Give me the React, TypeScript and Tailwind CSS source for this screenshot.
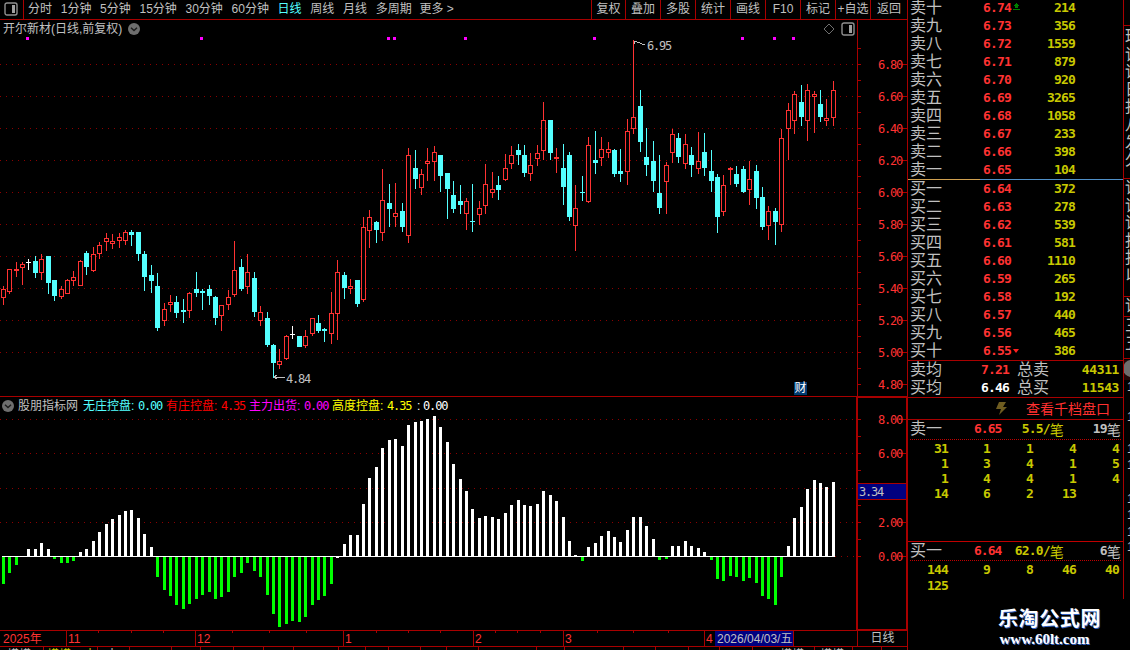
import React from "react";

type K = [number, number, number, number, string];
const seg1: K[] = [
[258,267,293,315,"r"],[207,208,275,281,"r"],[186,207,212,231,"r"],[186,193,203,255,"r"],[178,186,189,210,"w"],[168,183,219,234,"c"],[162,178,219,240,"r"],[168,168,249,282,"c"],[240,240,288,303,"c"],[258,267,291,297,"r"],
[237,240,282,282,"r"],[213,232,243,258,"r"],[180,183,258,258,"r"],[153,159,201,225,"c"],[141,162,213,216,"r"],[126,135,162,177,"r"],[99,114,125,153,"r"],[102,123,132,147,"r"],[99,111,122,144,"r"],[90,96,123,135,"r"],
[90,96,105,138,"c"],[96,96,162,183,"c"],[153,162,231,273,"c"],[195,225,243,279,"c"],[219,258,384,393,"c"],[309,327,363,378,"r"],[285,306,315,336,"r"],[288,306,339,354,"c"],[297,330,336,369,"c"],[276,279,333,354,"r"],
[216,267,279,291,"c"],[267,272,278,330,"c"],[255,267,288,315,"c"],[288,291,354,375,"c"],[315,315,348,393,"r"],[270,291,315,330,"r"],[123,210,285,291,"r"],[177,201,267,273,"c"],[162,216,261,282,"r"],[216,234,336,351,"c"],
[318,336,363,378,"r"],[336,354,435,441,"c"],[432,435,489,534,"c"],[447,483,495,507,"r"],[405,408,477,480,"r"],
];
const seg2: K[] = [
[588,611,614,627,"w"],[618,618,651,651,"c"],[600,618,648,654,"r"],[564,565,612,618,"r"],[555,579,603,609,"c"],[594,597,603,636,"c"],[486,549,612,642,"r"],[390,426,552,630,"r"],[426,435,474,507,"c"],[447,468,477,492,"r"],
[450,450,522,531,"c"],[261,291,510,516,"r"],[240,261,303,354,"r"],[273,276,300,339,"c"],[117,210,309,333,"r"],[162,219,237,291,"c"],[159,249,261,291,"r"],[219,243,291,306,"c"],[54,75,318,339,"r"],[60,114,147,177,"c"],
[117,132,174,195,"r"],[54,93,102,153,"r"],[48,66,96,153,"r"],[75,75,138,186,"c"],[129,129,177,267,"c"],[153,195,237,249,"c"],[165,213,225,252,"c"],[204,213,252,300,"r"],[162,272,275,306,"c"],[213,234,255,285,"r"],
[102,162,228,252,"r"],[126,177,189,204,"r"],[138,165,180,210,"c"],[72,114,150,153,"r"],[48,75,102,117,"r"],[42,60,75,105,"c"],[45,75,129,141,"c"],[69,105,132,153,"r"],[45,69,87,108,"r"],
[-84,-30,63,90,"r"],[-30,-30,69,90,"c"],[54,81,87,129,"r"],
];
const seg3: K[] = [
[342,414,471,525,"c"],[366,375,561,573,"c"],[465,534,587,663,"r"],[438,486,489,513,"c"],[321,345,516,519,"r"],[303,390,399,432,"c"],[321,357,384,408,"r"],[336,357,369,384,"r"],[357,360,432,441,"c"],[357,423,432,456,"c"],
[267,303,426,465,"r"],[30,261,297,312,"r"],[180,228,336,366,"c"],[294,381,405,438,"c"],[333,393,453,486,"c"],[375,489,534,552,"c"],[396,405,456,552,"r"],[297,312,369,399,"r"],[309,324,381,399,"c"],[312,342,402,417,"r"],
[351,375,405,441,"c"],[306,393,417,432,"r"],[309,366,414,438,"c"],[360,423,453,486,"c"],[432,441,561,609,"c"],[435,465,546,558,"r"],[411,414,420,465,"r"],[408,432,462,471,"c"],[408,417,486,489,"c"],[393,447,480,525,"r"],
[405,423,504,537,"c"],[471,501,591,600,"c"],[528,543,588,630,"r"],[534,543,576,645,"c"],[297,324,585,606,"r"],[219,240,297,390,"r"],[183,192,273,312,"r"],[165,216,261,288,"c"],[162,180,273,333,"r"],[183,192,201,309,"r"],
[180,222,261,276,"c"],[207,264,273,288,"r"],[153,180,264,288,"r"],
];
const conv = (s: K[], y0: number): K[] =>
  s.map(([a, b, c, d, e]) => [Math.round(y0 + a / 3), Math.round(y0 + b / 3), Math.round(y0 + c / 3), Math.round(y0 + d / 3), e]);
const candles: K[] = [...conv(seg1, 200), ...conv(seg2, 130), ...conv(seg3, 30)];

const bars = [
567,534,510,484,462,462,444,462,492,504,504,498,471,462,438,411,387,372,360,348,
345,369,417,456,546,585,603,630,642,627,612,600,591,612,606,591,546,534,504,528,
546,600,657,696,687,678,681,666,630,615,603,567,489,447,420,420,327,249,216,159,
135,132,153,90,81,78,72,63,96,141,207,252,288,342,369,363,366,372,354,330,
315,330,333,327,288,300,318,366,438,480,498,456,444,423,408,426,441,405,366,366,
393,432,495,492,453,453,438,453,459,471,495,552,558,543,546,558,549,564,603,612,
630,546,453,369,336,282,255,264,276,261,
];
const xAt = (i: number) => Math.floor(3.2 + 6.435 * i);
const RED = "#ff3232";
const CY = "#54ffff";
const LINE = "#a80000";
const DOT = "#8c0000";

function CandleMark({ k, i }: { k: K; i: number }) {
  const [h, t, b, l, c] = k;
  const x = xAt(i);
  const col = c === "r" ? RED : c === "c" ? CY : "#ffffff";
  const thin = b - t <= 2;
  return (
    <g>
      <rect x={x} y={h} width={1} height={l - h} fill={col} />
      {thin ? (
        <rect x={x - 2} y={t} width={5} height={Math.max(1, b - t)} fill={col} />
      ) : c === "r" ? (
        <rect x={x - 1.5} y={t + 0.5} width={4} height={b - t - 1} fill="#000" stroke={col} strokeWidth={1} />
      ) : (
        <rect x={x - 2} y={t} width={5} height={b - t} fill={col} />
      )}
    </g>
  );
}

function MainChart() {
  const grids = [64, 96, 128, 160, 192, 224, 256, 288, 320, 352];
  const marks = [27, 201, 388, 394, 465, 594, 742, 774, 793];
  return (
    <svg width={857} height={376} viewBox="0 20 857 376" shapeRendering="crispEdges" className="block">
      {grids.map((y) => (
        <line key={y} x1={0} x2={857} y1={y + 0.5} y2={y + 0.5} stroke={DOT} strokeDasharray="1 5" />
      ))}
      {marks.map((x) => (
        <rect key={x} x={x - 1} y={37} width={3} height={3} fill="#ff00ff" />
      ))}
      {candles.map((k, i) => (
        <CandleMark key={i} k={k} i={i} />
      ))}
      <g stroke="#c0c0c0" fill="none">
        <path d="M634 41h3M634 41v3M637 42l8 3" />
        <path d="M274 377h11M274 377l3-2M274 377l3 2" />
      </g>
      <text x={647} y={50} fontSize={12} fill="#c0c0c0" letterSpacing={-1.2} className="font-['DejaVu_Sans_Mono',monospace]">6.95</text>
      <text x={286} y={383} fontSize={12} fill="#c0c0c0" letterSpacing={-1.2} className="font-['DejaVu_Sans_Mono',monospace]">4.84</text>
    </svg>
  );
}

function MainAxis() {
  const labels = ["6.80", "6.60", "6.40", "6.20", "6.00", "5.80", "5.60", "5.40", "5.20", "5.00", "4.80"];
  const ticks = Array.from({ length: 22 }, (_, i) => 48 + i * 16);
  return (
    <svg width={49} height={376} viewBox="858 20 49 376" shapeRendering="crispEdges" className="block">
      {ticks.map((y) => (
        <rect key={y} x={858} y={y} width={3} height={1} fill={LINE} />
      ))}
      {labels.map((t, i) => (
        <g key={t}>
          <rect x={902} y={64 + i * 32} width={5} height={1} fill={LINE} />
          <text x={878} y={69 + i * 32} fontSize={12} fill={RED} letterSpacing={-1.2} className="font-['DejaVu_Sans_Mono',monospace]">{t}</text>
        </g>
      ))}
    </svg>
  );
}

function IndicatorChart() {
  const grids = [419, 453, 488, 522];
  return (
    <svg width={856} height={233} viewBox="0 397 856 233" shapeRendering="crispEdges" className="block">
      {grids.map((y) => (
        <line key={y} x1={0} x2={856} y1={y + 0.5} y2={y + 0.5} stroke={DOT} strokeDasharray="1 5" />
      ))}
      <line x1={835} x2={856} y1={556.5} y2={556.5} stroke={DOT} strokeDasharray="1 5" />
      {bars.map((v, i) => {
        const y = 395 + v / 3;
        if (v === 484) return null;
        const up = v < 484;
        const x = xAt(i) - 1;
        const white = up || i === 52;
        return (
          <rect key={i} x={x} y={up ? Math.round(y) : 556} width={3} height={up ? 556 - Math.round(y) : Math.round(y) - 556} fill={white ? "#ffffff" : "#00ff00"} />
        );
      })}
      <rect x={2} y={556} width={833} height={1} fill="#ffffff" />
    </svg>
  );
}

function IndicatorAxis() {
  const labels: [string, number][] = [["8.00", 419], ["6.00", 453], ["2.00", 522], ["0.00", 556]];
  const ticks = [419, 436, 453, 470, 488, 505, 522, 539, 556];
  return (
    <svg width={48} height={231} viewBox="858 398 48 231" shapeRendering="crispEdges" className="block">
      {ticks.map((y) => (
        <rect key={y} x={858} y={y} width={3} height={1} fill={LINE} />
      ))}
      {[419, 453, 488, 522, 556].map((y) => (
        <rect key={y} x={901} y={y} width={5} height={1} fill={LINE} />
      ))}
      {labels.map(([t, y]) => (
        <text key={t} x={878} y={y + 5} fontSize={12} fill={RED} letterSpacing={-1.2} className="font-['DejaVu_Sans_Mono',monospace]">{t}</text>
      ))}
      <rect x={858} y={483} width={48} height={1} fill={LINE} />
      <rect x={858} y={499} width={48} height={1} fill={LINE} />
      <rect x={858} y={484} width={48} height={15} fill="#000080" />
      <text x={859} y={496} fontSize={12} fill="#c0c0c0" letterSpacing={-1.2} className="font-['DejaVu_Sans_Mono',monospace]">3.34</text>
    </svg>
  );
}

function TimeAxis() {
  const seps = [66, 195, 343, 473, 563, 704];
  const ticks = [98, 131, 163, 232, 269, 306, 376, 408, 440, 495, 517, 540, 597, 633, 668];
  const labels: [string, number][] = [["11", 68], ["12", 197], ["1", 345], ["2", 475], ["3", 565], ["4", 706]];
  return (
    <svg width={857} height={15} viewBox="0 631 857 15" shapeRendering="crispEdges" className="block">
      {seps.map((x) => (
        <rect key={x} x={x} y={631} width={1} height={15} fill={LINE} />
      ))}
      {ticks.map((x) => (
        <rect key={x} x={x} y={631} width={1} height={2} fill={LINE} />
      ))}
      <text x={3} y={643} fontSize={12} fill={RED}>2025年</text>
      {labels.map(([t, x]) => (
        <text key={t} x={x} y={643} fontSize={12} fill={RED}>{t}</text>
      ))}
      <rect x={715} y={631} width={79} height={15} fill="#000080" />
      <rect x={793} y={631} width={1} height={15} fill={LINE} />
      <text x={717} y={643} fontSize={12} fill="#c0c0c0">2026/04/03/五</text>
    </svg>
  );
}

function FooterRow() {
  const ticks = [43, 97, 129, 171, 200, 233, 263, 293, 338, 365, 388, 420, 446, 478, 536, 564, 623, 655, 688, 719, 752, 814, 852, 881];
  return (
    <svg width={907} height={3} viewBox="0 647 907 3" shapeRendering="crispEdges" className="block">
      {ticks.map((x) => (
        <rect key={x} x={x} y={647} width={1} height={3} fill={LINE} />
      ))}
      <text x={7} y={659} fontSize={12} fill="#c0c0c0">横横</text>
      <text x={47} y={659} fontSize={12} fill="#c8c800">横横</text>
      <text x={84} y={659} fontSize={12} fill="#c8c800">十</text>
      <text x={106} y={659} fontSize={12} fill="#c0c0c0">十</text>
      <text x={780} y={659} fontSize={12} fill="#c0c0c0">横横</text>
      <text x={820} y={659} fontSize={12} fill="#c0c0c0">横横</text>
    </svg>
  );
}

function PanelIcon() {
  return (
    <svg width={14} height={14} viewBox="0 0 14 14" className="block shrink-0" shapeRendering="crispEdges">
      <rect x={1} y={1} width={12} height={12} rx={2} fill="none" stroke="#909090" strokeWidth={1.4} shapeRendering="auto" />
      <rect x={8} y={3} width={3} height={8} fill="#a0a0a0" />
    </svg>
  );
}

function Chevron() {
  return (
    <svg width={12} height={12} viewBox="0 0 12 12" className="block shrink-0">
      <circle cx={6} cy={6} r={6} fill="#6e6e6e" />
      <path d="M3 4.8L6 7.6L9 4.8" fill="none" stroke="#1c1c1c" strokeWidth={1.4} />
    </svg>
  );
}

function Tool({ t, className = "" }: { t: string; className?: string }) {
  return <span className={className}>{t}</span>;
}

function Toolbar() {
  const right = [["复权", 34], ["叠加", 35], ["多股", 35], ["统计", 35], ["画线", 35], ["F10", 35], ["标记", 35], ["+自选", 35], ["返回", 37]] as const;
  return (
    <div className="flex h-[20px] border-b border-[#a80000] text-[12px] leading-[19px] text-[#c0c0c0]">
      <div className="flex w-[24px] items-center justify-center border-r border-[#a80000] pb-[1px] pr-[2px]">
        <PanelIcon />
      </div>
      <div className="flex flex-1 gap-[8.7px] pl-[4px] whitespace-nowrap">
        <Tool t="分时" />
        <Tool t="1分钟" />
        <Tool t="5分钟" />
        <Tool t="15分钟" />
        <Tool t="30分钟" />
        <Tool t="60分钟" />
        <Tool t="日线" className="text-[#54ffff]" />
        <Tool t="周线" />
        <Tool t="月线" />
        <Tool t="多周期" />
        <span className="-ml-[1px]">更多 &gt;</span>
      </div>
      <div className="flex">
        {right.map(([t, w]) => (
          <span key={t} style={{ width: w }} className="whitespace-nowrap border-l border-[#a80000] text-center">
            {t}
          </span>
        ))}
      </div>
    </div>
  );
}

function BookRow({ l, p, v, mark }: { l: string; p: string; v: string; mark?: React.ReactNode }) {
  return (
    <div className="flex h-[18px] items-center">
      <span className="w-[75px] pl-[2px] text-[16px] leading-[18px] text-[#c0c0c0]">{l}</span>
      <span className="w-[30px] font-['DejaVu_Sans_Mono',monospace] text-[13px] font-bold tracking-[-0.8px] text-[#ff3232]">{p}</span>
      <span className="flex w-[7px] items-center">{mark}</span>
      <span className="w-[55px] text-right font-['DejaVu_Sans_Mono',monospace] text-[13px] font-bold tracking-[-0.8px] text-[#c8c800]">{v}</span>
    </div>
  );
}

const sells: [string, string, string][] = [["卖十", "6.74", "214"], ["卖九", "6.73", "356"], ["卖八", "6.72", "1559"], ["卖七", "6.71", "879"], ["卖六", "6.70", "920"], ["卖五", "6.69", "3265"], ["卖四", "6.68", "1058"], ["卖三", "6.67", "233"], ["卖二", "6.66", "398"], ["卖一", "6.65", "104"]];
const buys: [string, string, string][] = [["买一", "6.64", "372"], ["买二", "6.63", "278"], ["买三", "6.62", "539"], ["买四", "6.61", "581"], ["买五", "6.60", "1110"], ["买六", "6.59", "265"], ["买七", "6.58", "192"], ["买八", "6.57", "440"], ["买九", "6.56", "465"], ["买十", "6.55", "386"]];

function NumGrid({ rows, rowClass }: { rows: string[][]; rowClass: string }) {
  return (
    <div className="-mt-[1px] font-['DejaVu_Sans_Mono',monospace] text-[13px] font-bold tracking-[-0.8px] text-[#c8c800]">
      {rows.map((r, i) => (
        <div key={i} className={`grid grid-cols-[40px_42px_43px_43px_43px] ${rowClass} items-center text-right`}>
          {r.map((c, j) => (
            <span key={j}>{c}</span>
          ))}
        </div>
      ))}
    </div>
  );
}

function SummaryRow({ l, p, pc, t, v }: { l: string; p: string; pc: string; t: string; v: string }) {
  return (
    <div className="flex h-[18px] items-center">
      <span className="w-[72px] pl-[2px] text-[16px] leading-[18px] text-[#c0c0c0]">{l}</span>
      <span className={`w-[29px] text-right font-['DejaVu_Sans_Mono',monospace] text-[13px] font-bold tracking-[-0.8px] ${pc}`}>{p}</span>
      <span className="ml-[8px] w-[32px] text-[16px] leading-[18px] text-[#c0c0c0]">{t}</span>
      <span className="w-[70px] text-right font-['DejaVu_Sans_Mono',monospace] text-[13px] font-bold tracking-[-0.4px] text-[#c8c800]">{v}</span>
    </div>
  );
}

function TickHead({ l, p, a, n }: { l: string; p: string; a: string; n: string }) {
  return (
    <div className="flex h-[18px] items-center">
      <span className="w-[66px] pl-[2px] text-[16px] leading-[18px] text-[#c0c0c0]">{l}</span>
      <span className="w-[28px] font-['DejaVu_Sans_Mono',monospace] text-[13px] font-bold tracking-[-1px] text-[#ff3232]">{p}</span>
      <span className="flex w-[61px] items-center justify-end font-['DejaVu_Sans_Mono',monospace] text-[13px] font-bold tracking-[-0.8px] text-[#c8c800]">
        {a}
        <span className="font-['Noto_Sans_CJK_SC'] text-[14px] font-normal">笔</span>
      </span>
      <span className="flex w-[57px] items-center justify-end font-['DejaVu_Sans_Mono',monospace] text-[13px] font-bold tracking-[-0.8px] text-[#c0c0c0]">
        {n}
        <span className="font-['Noto_Sans_CJK_SC'] text-[14px] font-normal">笔</span>
      </span>
    </div>
  );
}

function Book() {
  const up = (
    <svg width={7} height={8} viewBox="0 0 7 8" className="-mt-[3px]" shapeRendering="crispEdges">
      <path d="M3 0h1v1h1v1h1v1h-5v-1h1v-1h1z M2 3h3v2h-3z M0 6h7v1h-7z" fill="#008000" />
    </svg>
  );
  const down = (
    <svg width={7} height={5} viewBox="0 0 7 5">
      <path d="M0 0h6L3 4z" fill="#ff2020" />
    </svg>
  );
  return (
    <div className="w-[216px] shrink-0">
      <div className="h-[600px] border-r border-[#a80000]">
        <div className="-mt-[1px]">
          {sells.map(([l, p, v], i) => (
            <BookRow key={l} l={l} p={p} v={v} mark={i === 0 ? up : undefined} />
          ))}
        </div>
        <div className="flex h-[1px]">
          <div className="w-[72px] bg-[#d0a050]" />
          <div className="flex-1 bg-[#5090c8]" />
        </div>
        {buys.map(([l, p, v], i) => (
          <BookRow key={l} l={l} p={p} v={v} mark={i === 9 ? down : undefined} />
        ))}
        <div className="border-t border-[#a80000]" />
        <SummaryRow l="卖均" p="7.21" pc="text-[#ff3232]" t="总卖" v="44311" />
        <SummaryRow l="买均" p="6.46" pc="text-white" t="总买" v="11543" />
        <div className="flex h-[23px] items-center border-y border-[#a80000]">
          <svg width={11} height={13} viewBox="0 0 11 13" className="ml-[88px]">
            <path d="M3 0h7L7 5h4L3 13l2-6H0z" fill="#6e5c20" />
          </svg>
          <span className="ml-[19px] text-[14px] leading-[20px] text-[#ff3030]">查看千档盘口</span>
        </div>
        <TickHead l="卖一" p="6.65" a="5.5/" n="19" />
        <div className="mx-[2px] mt-[1px] border-t border-dotted border-[#c00000]" />
        <div className="h-[102px]">
          <NumGrid rowClass="h-[15px]" rows={[["31", "1", "1", "4", "4"], ["1", "3", "4", "1", "5"], ["1", "4", "4", "1", "4"], ["14", "6", "2", "13", ""]]} />
        </div>
        <div className="border-t border-[#c00000]" />
        <TickHead l="买一" p="6.64" a="62.0/" n="6" />
        <div className="mx-[2px] border-t border-dotted border-[#c00000]" />
        <NumGrid rowClass="h-[15.5px]" rows={[["144", "9", "8", "46", "40"], ["125", "", "", "", ""]]} />
      </div>
    </div>
  );
}

function StripChars({ t, h }: { t: string; h: string }) {
  return (
    <div className={`${h} overflow-hidden border-b border-[#a80000] pl-[1px]`}>
      {t.split("").map((c, i) => (
        <div key={i} className="h-[17.6px] w-[16px] text-[16px] leading-[18px] text-[#c0c0c0]">{c}</div>
      ))}
    </div>
  );
}

function Strip() {
  return (
    <div className="w-[6px] shrink-0 overflow-hidden">
      <div className="h-[26px] border-b border-[#a80000]" />
      <div className="pt-[2px]" />
      <StripChars t="玛详详日报八发久" h="h-[151px]" />
      <StripChars t="详详详报报以" h="h-[118px]" />
      <StripChars t="详" h="h-[20px]" />
      <StripChars t="三五" h="h-[42px]" />
      <div className="relative h-[20px] bg-[#200808]">
        <div className="-ml-[1px] mt-[1px] h-[17px] w-[17px] rounded-full bg-[#6e6e6e]" />
      </div>
      <div className="flex flex-col pl-[3px] text-[12px] text-[#c0c0c0]">
        <span className="mt-[0px] h-[15px] leading-[15px]">1</span>
        <span className="mt-[15px] h-[15px] leading-[15px]">1</span>
        <span className="mt-[17px] h-[15px] leading-[15px]">1</span>
        <span className="mt-[1px] h-[15px] leading-[15px]">1</span>
        <span className="mt-[19px] h-[15px] leading-[15px]">1</span>
        <span className="mt-[1px] h-[15px] leading-[15px]">1</span>
        <span className="mt-[2px] h-[15px] leading-[15px]">1</span>
        <span className="h-[15px] leading-[15px]">1</span>
      </div>
    </div>
  );
}

function IndicatorHeader() {
  const items: [string, string, string][] = [
    ["无庄控盘", "0.00", "text-[#54ffff]"],
    ["有庄控盘", "4.35", "text-[#ff0000]"],
    ["主力出货", "0.00", "text-[#ff00ff]"],
    ["高度控盘", "4.35", "text-[#ffff00]"],
  ];
  return (
    <div className="absolute left-[2px] top-[2px] flex items-center whitespace-nowrap text-[12px] leading-[14px]">
      <Chevron />
      <span className="ml-[4px] mr-[5px] text-[#c0c0c0]">股朋指标网</span>
      {items.map(([a, b, c]) => (
        <span key={a} className={`mr-[5px] flex ${c}`}>
          {a}
          <span className="w-[7px]">:</span>
          <span className="w-[23px] font-['DejaVu_Sans_Mono',monospace] tracking-[-1.2px]">{b}</span>
        </span>
      ))}
      <span className="flex text-white">
        <span className="ml-[2px] w-[6px]">:</span>
        <span className="font-['DejaVu_Sans_Mono',monospace] tracking-[-1.2px]">0.00</span>
      </span>
    </div>
  );
}

export default function App() {
  return (
    <div className="relative flex h-[650px] w-[1130px] overflow-hidden bg-black font-['Liberation_Sans','Noto_Sans_CJK_SC',sans-serif]">
      <div className="flex w-[908px] shrink-0 flex-col border-r border-[#a80000]">
        <Toolbar />
        <div className="flex h-[377px] border-b border-[#a80000]">
          <div className="relative w-[857px] shrink-0">
            <MainChart />
            <div className="absolute left-[3px] top-[2px] flex items-center gap-[6px] whitespace-nowrap text-[12px] leading-[14px] text-[#c0c0c0]">
              <span>开尔新材(日线,前复权)</span>
              <Chevron />
            </div>
            <svg width={12} height={12} viewBox="0 0 12 12" className="absolute left-[823px] top-[3px]">
              <path d="M6 1L11 6L6 11L1 6Z" fill="none" stroke="#707070" />
            </svg>
            <div className="absolute left-[841px] top-[2px]">
              <PanelIcon />
            </div>
            <div className="absolute left-[794px] top-[362px] flex h-[13px] w-[13px] items-center justify-center bg-[#003a70] text-[12px] leading-[13px] text-white">
              财
            </div>
          </div>
          <div className="flex-1 border-l border-[#a80000]">
            <MainAxis />
          </div>
        </div>
        <div className="flex h-[233px]">
          <div className="relative w-[856px] shrink-0">
            <IndicatorChart />
            <IndicatorHeader />
          </div>
          <div className="w-[51px] border-y border-l-2 border-r border-[#a80000]">
            <IndicatorAxis />
          </div>
        </div>
        <div className="flex h-[17px] border-y border-[#a80000] text-[12px]">
          <div className="w-[857px] shrink-0">
            <TimeAxis />
          </div>
          <div className="flex-1 border-l border-[#a80000] text-center leading-[15px] text-[#c0c0c0]">日线</div>
        </div>
        <FooterRow />
      </div>
      <Book />
      <Strip />
      <div className="absolute left-[998px] top-[607px] flex w-[103px] flex-col items-center">
        <span className="text-[20px] leading-[24px] font-bold tracking-[0.6px] text-white [text-shadow:1px_1px_0_#3060c0] font-['Liberation_Serif','Noto_Sans_CJK_SC',serif]">乐淘公式网</span>
        <span className="-ml-[10px] text-[15px] leading-[16px] font-bold text-white [text-shadow:1px_1px_0_#3060c0] font-['Liberation_Serif',serif]">www.60lt.com</span>
      </div>
    </div>
  );
}
